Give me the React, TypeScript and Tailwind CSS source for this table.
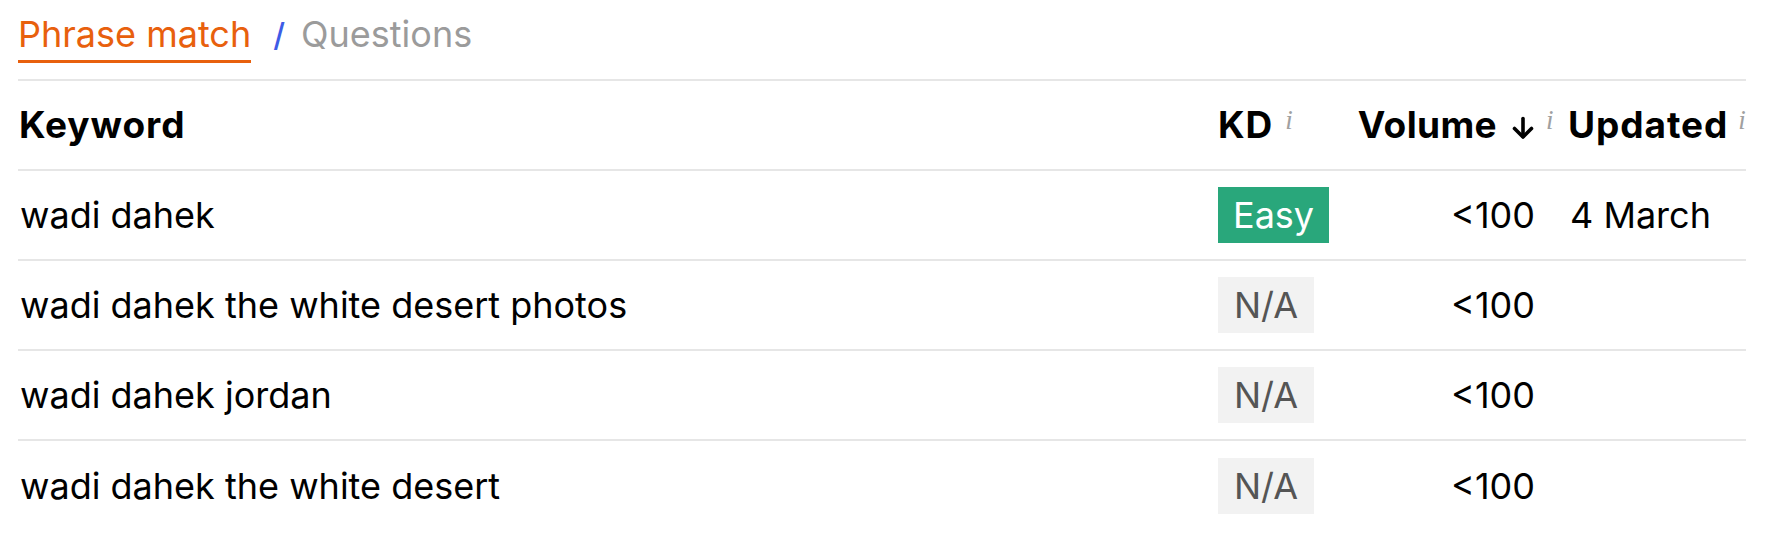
import React from "react";

const rows = [
  { kw: "wadi dahek", kd: "Easy", vol: "<100", upd: "4 March" },
  { kw: "wadi dahek the white desert photos", kd: "N/A", vol: "<100", upd: "" },
  { kw: "wadi dahek jordan", kd: "N/A", vol: "<100", upd: "" },
  { kw: "wadi dahek the white desert", kd: "N/A", vol: "<100", upd: "" },
];

function Info({ className = "" }: { className?: string }) {
  return (
    <span
      className={
        "italic font-normal tracking-normal text-[27px] leading-none text-[#a0a0a0] font-['Liberation_Serif',serif] " +
        className
      }
    >
      i
    </span>
  );
}

function DownArrow() {
  return (
    <svg width="24" height="24" viewBox="0 0 24 24" fill="none" className="ml-[14px] mt-[6px]">
      <path d="M12 2.5V20.5" stroke="#000" strokeWidth="3.6" strokeLinecap="round" />
      <path d="M3.5 12.5L12 21L20.5 12.5" stroke="#000" strokeWidth="3.6" strokeLinecap="round" strokeLinejoin="round" />
    </svg>
  );
}

export default function App() {
  return (
    <div className="w-full h-[548px] bg-white pl-[18px] pr-[24px] font-['Inter','Noto_Sans',sans-serif] text-black">
      <div className="flex items-end pt-[9px]">
        <span className="text-[36px] leading-[51px] text-[#e8600d] border-b-[3px] border-[#e8600d]">
          Phrase match
        </span>
        <span className="ml-[22px] mr-[16px] text-[32px] leading-[51px] mb-[3px] font-medium text-[#3d5ce6]">/</span>
        <span className="text-[36px] leading-[51px] mb-[3px] text-[#9b9b9b]">Questions</span>
      </div>

      <div className="mt-[16px] border-t-2 border-[#e6e6e6]">
        <div className="grid grid-cols-[1fr_139px_180px_209px] h-[90px] border-b-2 border-[#e6e6e6] items-center text-[37px] font-bold tracking-[0.025em]">
          <div className="pl-[1px]">Keyword</div>
          <div className="flex items-start">
            <span>KD</span>
            <Info className="ml-[12px] mt-[10px]" />
          </div>
          <div className="flex justify-end pr-[2px]">
            <span className="relative flex items-center">
              <span className="tracking-[0.01em]">Volume</span>
              <DownArrow />
              <Info className="absolute left-full top-[10px] ml-[11px]" />
            </span>
          </div>
          <div className="pl-[31px] flex items-start">
            <span>Updated</span>
            <Info className="ml-[10px] mt-[10px]" />
          </div>
        </div>

        {rows.map((r, i) => (
          <div
            key={i}
            className={
              "grid grid-cols-[1fr_139px_180px_209px] h-[90px] items-center text-[36px] " +
              (i < rows.length - 1 ? "border-b-2 border-[#e6e6e6]" : "")
            }
          >
            <div className="pl-[2px]">{r.kw}</div>
            <div>
              {r.kd === "Easy" ? (
                <span className="inline-flex items-center h-[56px] px-[15px] bg-[#29a77b] text-white">
                  Easy
                </span>
              ) : (
                <span className="inline-flex items-center h-[56px] px-[16px] bg-[#f2f2f2] text-[#555555]">
                  N/A
                </span>
              )}
            </div>
            <div className="text-right pr-[2px]">{r.vol}</div>
            <div className="pl-[33px]">{r.upd}</div>
          </div>
        ))}
      </div>
    </div>
  );
}
